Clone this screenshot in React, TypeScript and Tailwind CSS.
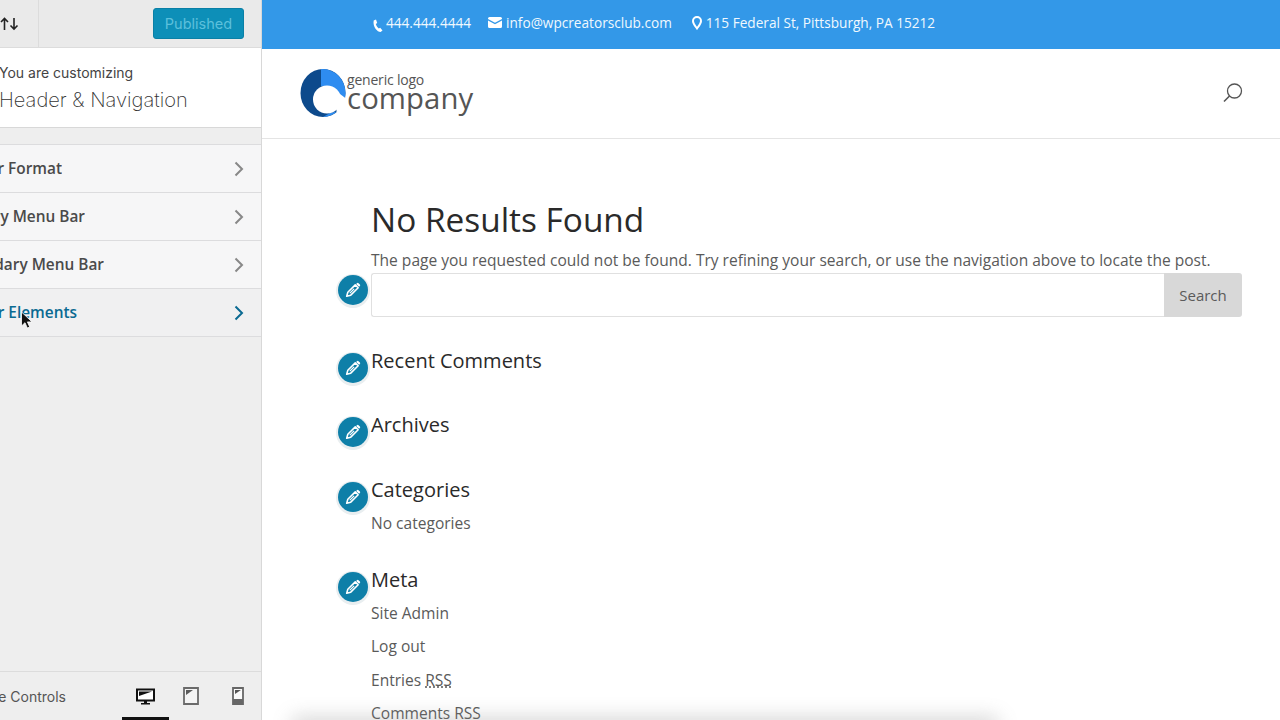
import React from "react";

const font = "font-['Open_Sans','Noto_Sans',sans-serif]";
const inter = "font-['Inter','Liberation_Sans',sans-serif]";

function Pencil({ className = "" }: { className?: string }) {
  return (
    <div className={`absolute left-[-33px] w-[30px] h-[30px] rounded-full bg-[#0e7fa8] shadow-[0_1px_0_2px_#e9eef0] flex items-center justify-center ${className}`}>
      <svg width="18" height="18" viewBox="0 0 16 16" fill="none">
        <path d="M2.400 13.600l1-3.600 6.600-6.600 2.600 2.600-6.600 6.600z" stroke="#fff" strokeWidth="1.400" strokeLinejoin="round" />
        <path d="M10.800 2.600l.7-.7a1 1 0 0 1 1.400 0l1.200 1.200a1 1 0 0 1 0 1.400l-.7.7z" fill="#fff" />
        <path d="M5.200 10.800l3.800-3.800" stroke="#fff" strokeWidth="1.100" />
      </svg>
    </div>
  );
}

function Row({ text, end, active }: { text: string; end: number; active?: boolean }) {
  return (
    <div className={`h-[48px] shrink-0 border-b border-[#dcdcde] flex items-center justify-between pr-[16px] ${active ? "bg-[#f0f0f1]" : "bg-[#f6f6f7]"}`}>
      <div className="overflow-hidden flex justify-end" style={{ width: end }}>
        <span className={`whitespace-nowrap shrink-0 text-[15.400px] font-semibold ${font} ${active ? "text-[#0a6a92]" : "text-[#4a4a4a]"}`}>{text}</span>
      </div>
      <svg width="12" height="16" viewBox="0 0 12 16" fill="none" stroke={active ? "#0a6a92" : "#888"} strokeWidth="2">
        <path d="M2.500 1.500L9 8l-6.500 6.500" />
      </svg>
    </div>
  );
}

function Sidebar() {
  return (
    <aside className="w-[262px] h-[720px] shrink-0 bg-[#eeeeee] border-r border-[#d8d8d8] flex flex-col relative overflow-hidden">
      <div className="h-[48px] shrink-0 bg-[#eaeaea] border-b border-[#dcdcdc] flex items-center justify-between pr-[17px]">
        <div className="w-[39px] h-full border-r border-[#dcdcdc] flex items-center">
          <svg width="20" height="14" viewBox="0 0 20 14" fill="none" stroke="#222" strokeWidth="1.600">
            <path d="M4.500 13V2M1 5l3.500-3.500L8 5" />
            <path d="M14 1v11M10.500 8.500L14 12l3.500-3.500" />
          </svg>
        </div>
        <div className={`w-[91px] h-[31px] rounded-[3px] bg-[#0d8fb8] border border-[#0a80a6] flex items-center justify-center text-[14.500px] text-[#5cc0dc] ${inter}`}>Published</div>
      </div>
      <div className="h-[80px] shrink-0 bg-white border-b border-[#d8d8d8] flex flex-col pt-[15px] -ml-[1px]">
        <div className={`text-[14px] leading-[20px] text-[#444] ${inter}`}>You are customizing</div>
        <div className={`text-[20.100px] leading-[28px] mt-[3px] font-extralight text-[#333] ${inter}`}>Header &amp; Navigation</div>
      </div>
      <div className="h-[17px] shrink-0 border-b border-[#dcdcde]" />
      <Row text="Header Format" end={62} />
      <Row text="Primary Menu Bar" end={85} />
      <Row text="Secondary Menu Bar" end={104} />
      <Row text="Header Elements" end={77} active />
      <div className="flex-1" />
      <div className="h-[49px] shrink-0 border-t border-[#dcdcdc] flex items-center relative">
        <div className="w-[66px] overflow-hidden flex justify-end">
          <span className={`whitespace-nowrap shrink-0 text-[14px] text-[#555] ${inter}`}>Responsive Controls</span>
        </div>
        <div className="flex items-center ml-[70px]">
          <svg width="19" height="19" viewBox="0 0 19 19">
            <path d="M1 2.500h17v11H1z" fill="#fff" stroke="#111" strokeWidth="2" />
            <path d="M3 4.500h13L3 9z" fill="#111" />
            <path d="M8 14h3v2h3v1.500H5V16h3z" fill="#111" />
          </svg>
          <svg width="16" height="18" viewBox="0 0 16 18" className="ml-[28px]">
            <path d="M1 1h14v16H1z" fill="#f4f4f4" stroke="#6a6a6a" strokeWidth="1.800" />
            <path d="M3 3h7L3 8z" fill="#5a5a5a" />
          </svg>
          <svg width="12" height="18" viewBox="0 0 12 18" className="ml-[33px]">
            <path d="M1 1h10v16H1z" fill="#fafafa" stroke="#666" strokeWidth="1.800" />
            <path d="M3 3h6L3 7z" fill="#555" />
            <path d="M1 12h10v5H1z" fill="#666" />
          </svg>
        </div>
        <div className="absolute left-[122px] bottom-0 w-[47px] h-[3px] bg-[#111]" />
      </div>
      <svg className="absolute left-[20px] top-[311px]" width="13" height="19" viewBox="0 0 13 19">
        <path d="M1.500 1v14l3.500-3.300 2.300 5.300 2.400-1-2.300-5.100h4.600z" fill="#111" stroke="#fff" strokeWidth="0.800" />
      </svg>
    </aside>
  );
}

function TopBar() {
  return (
    <div className={`h-[49px] shrink-0 bg-[#3398e8] pl-[109px] flex items-center text-[13.640px] font-medium text-[#f0f8fe] pb-[3px] ${font}`}>
      <svg width="13" height="14" viewBox="0 0 13 14" className="mt-[6px] mr-[2px]" fill="#fff">
        <path d="M2.700 1.500L5 .6 6.200 4 4.800 5c.5 1.700 1.500 3.300 3 4.500l1.400-.8 2.300 2.700-1.900 1.700C6.400 13 1.500 8 2.700 1.500z" />
      </svg>
      <span>444.444.4444</span>
      <svg width="14" height="11" viewBox="0 0 14 11" className="ml-[17px] mr-[4px] -mt-[2px]" fill="#fff">
        <path d="M0 1.500A1.500 1.500 0 0 1 1.500 0h11A1.500 1.500 0 0 1 14 1.500v.4L7 5.800 0 1.900z" />
        <path d="M0 3.400l7 3.800 7-3.800V9.500A1.500 1.500 0 0 1 12.500 11h-11A1.500 1.500 0 0 1 0 9.500z" />
      </svg>
      <span>info@wpcreatorsclub.com</span>
      <svg width="10" height="14" viewBox="0 0 10 14" className="ml-[20px] mr-[4px]" fill="none" stroke="#fff" strokeWidth="2">
        <path d="M5 12.500C3 9.800 1 7.500 1 5a4 4 0 0 1 8 0c0 2.500-2 4.800-4 7.500z" />
      </svg>
      <span>115 Federal St, Pittsburgh, PA 15212</span>
    </div>
  );
}

function Header() {
  return (
    <div className="h-[90px] shrink-0 bg-white border-b border-[#e4e4e4] flex items-center pl-[38px] pr-[37px] justify-between">
      <div className="flex items-center -mt-[2px]">
        <svg width="46" height="48" viewBox="0 0 46 48">
          <ellipse cx="23" cy="24" rx="22.500" ry="24" fill="#0d4a8c" />
          <path d="M21 0.100A23 24 0 0 1 45.500 24C45.500 28 44 31 43 33C41 25 33 17 21 17z" fill="#2e8cf0" />
          <path d="M23 48A23 24 0 0 0 37 42.500L30 44z" fill="#2e8cf0" />
          <circle cx="27" cy="30.500" r="14" fill="#fff" />
          <path d="M36 22l10.500 8v12l-10 1z" fill="#fff" />
        </svg>
        <div className={`ml-[1px] -mt-[7px] flex flex-col text-[#555] ${font}`}>
          <span className="text-[14px] leading-[15px] mt-[4px] tracking-[-0.2px]">generic logo</span>
          <span className="text-[29.300px] leading-[24px] -mt-[1px] tracking-[0.1px]">company</span>
        </div>
      </div>
      <svg width="20" height="20" viewBox="0 0 20 20" fill="none" stroke="#555" strokeWidth="1.300" className="-mt-[2px]">
        <circle cx="11.500" cy="8" r="7" />
        <path d="M6.500 13L1 18.500" strokeWidth="1.600" />
      </svg>
    </div>
  );
}

function Content() {
  return (
    <div className={`relative flex-1 pl-[109px] pr-[38px] text-[#5a5a5a] ${font}`}>
      <h1 className="text-[33.400px] leading-[44px] text-[#2a2a2a] mt-[58px]">No Results Found</h1>
      <p className="text-[15.550px] leading-[24px] mt-[7px] whitespace-nowrap">The page you requested could not be found. Try refining your search, or use the navigation above to locate the post.</p>
      <div className="relative mt-[1px] flex h-[44px]">
        <Pencil className="top-[2px]" />
        <div className="flex-1 bg-white border border-[#e0e0e0] border-r-0 rounded-l-[3px]" />
        <div className="w-[78px] bg-[#d8d8d8] rounded-r-[3px] flex items-center justify-center text-[15px] text-[#5a5a5a]">Search</div>
      </div>
      <div className="relative mt-[30px]">
        <Pencil className="top-[6px]" />
        <h2 className="text-[20px] leading-[28px] text-[#2a2a2a]">Recent Comments</h2>
      </div>
      <div className="relative mt-[36px]">
        <Pencil className="top-[6px]" />
        <h2 className="text-[20px] leading-[28px] text-[#2a2a2a]">Archives</h2>
      </div>
      <div className="relative mt-[37px]">
        <Pencil className="top-[6px]" />
        <h2 className="text-[20px] leading-[28px] text-[#2a2a2a]">Categories</h2>
        <div className="text-[15.550px] leading-[33px] mt-[3px]">No categories</div>
      </div>
      <div className="relative mt-[26px]">
        <Pencil className="top-[6px]" />
        <h2 className="text-[20px] leading-[28px] text-[#2a2a2a]">Meta</h2>
        <div className="text-[15.550px] leading-[33.300px] mt-[3px]">
          <div>Site Admin</div>
          <div>Log out</div>
          <div>Entries <abbr className="underline decoration-dotted decoration-[#555]">RSS</abbr></div>
          <div>Comments <abbr>RSS</abbr></div>
        </div>
      </div>
    </div>
  );
}

export default function App() {
  return (
    <div className="w-[1280px] h-[720px] overflow-hidden flex bg-white relative">
      <Sidebar />
      <main className="flex-1 flex flex-col relative overflow-hidden">
        <TopBar />
        <Header />
        <Content />
        <div className="absolute left-[30px] right-[282px] bottom-[-14px] h-[16px] bg-[#8a8a8a] opacity-40 blur-[10px]" />
      </main>
    </div>
  );
}
